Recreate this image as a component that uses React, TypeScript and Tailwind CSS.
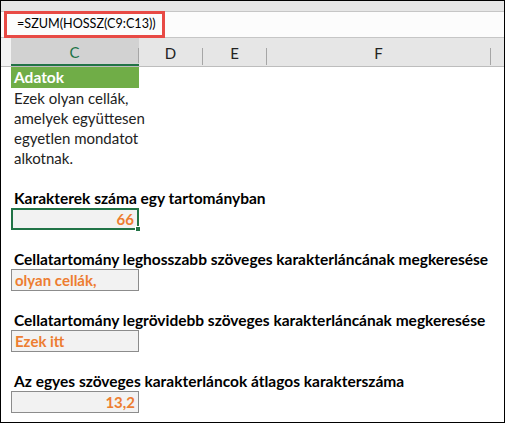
import React from 'react';

const font = { fontFamily: 'Lato, "Open Sans", sans-serif' };

function HeaderCell({ label, width, selected }: { label: string; width: string; selected?: boolean }) {
  return (
    <div
      className={`flex h-full items-stretch ${width} ${
        selected ? 'bg-[#d2d2d2] border-b-2 border-[#217346]' : ''
      }`}
    >
      <div
        className={`flex flex-1 items-center justify-center pt-[3px] text-[15px] ${
          selected ? 'text-[#217346]' : 'text-[#222]'
        }`}
      >
        {label}
      </div>
      <div className="mt-[10px] mb-[1px] w-px bg-[#a6a6a6]"></div>
    </div>
  );
}

function Group({ title, value, align, active }: { title: string; value: string; align: 'left' | 'right'; active?: boolean }) {
  return (
    <div>
      <div className="flex h-[20px] items-end whitespace-nowrap pl-[3px] pb-[1px] text-[15.5px] font-bold text-black leading-[18px]">
        {title}
      </div>
      <div className="relative h-[22px] w-[128px]">
        <div
          className={`flex h-full items-center bg-[#f2f2f2] px-[3px] text-[15px] font-bold text-[#ed7d31] ${
            active ? 'border-2 border-[#217346]' : 'border border-[#8c8c8c]'
          } ${align === 'right' ? 'justify-end' : 'justify-start'}`}
        >
          {value}
        </div>
        {active && (
          <div className="absolute -bottom-[2px] -right-[2px] h-[6px] w-[6px] bg-[#217346] border border-white"></div>
        )}
      </div>
      <div className="h-[19px]"></div>
    </div>
  );
}

export default function App() {
  return (
    <div className="h-[423px] w-[505px] overflow-hidden border border-black bg-white" style={font}>
      {/* felső sáv */}
      <div className="h-[10px] bg-[#e6e6e6]"></div>

      {/* szerkesztőléc */}
      <div className="flex h-[27px] border-y border-[#c6c6c6] bg-[#fcfcfc]">
        <div className="-my-px ml-[3px] flex w-[161px] items-center whitespace-nowrap border-[3px] border-[#e84a45] pl-[10px] text-[12.6px] text-black">
          =SZUM(HOSSZ(C9:C13))
        </div>
      </div>

      {/* oszlopfejlécek */}
      <div className="flex h-[29px] border-b border-[#bdbdbd] bg-[#e6e6e6]">
        <div className="w-[10px] bg-[#f3f3f3]"></div>
        <HeaderCell label="C" width="w-[128px]" selected />
        <HeaderCell label="D" width="w-[64px]" />
        <HeaderCell label="E" width="w-[64px]" />
        <HeaderCell label="F" width="w-[224px]" />
      </div>

      {/* cellák */}
      <div className="pl-[10px]">
        <div className="flex h-[21px] w-[128px] items-center bg-[#70ad47] pl-[3px] text-[15.5px] font-bold text-white">
          Adatok
        </div>
        <div className="w-[128px] whitespace-nowrap pl-[3px] text-[15px] leading-[20px] text-[#222]">
          <div>Ezek olyan cellák,</div>
          <div>amelyek együttesen</div>
          <div>egyetlen mondatot</div>
          <div>alkotnak.</div>
        </div>
        <div className="h-[20px]"></div>
        <Group title="Karakterek száma egy tartományban" value="66" align="right" active />
        <Group title="Cellatartomány leghosszabb szöveges karakterláncának megkeresése" value="olyan cellák," align="left" />
        <Group title="Cellatartomány legrövidebb szöveges karakterláncának megkeresése" value="Ezek itt" align="left" />
        <Group title="Az egyes szöveges karakterláncok átlagos karakterszáma" value="13,2" align="right" />
      </div>
    </div>
  );
}
